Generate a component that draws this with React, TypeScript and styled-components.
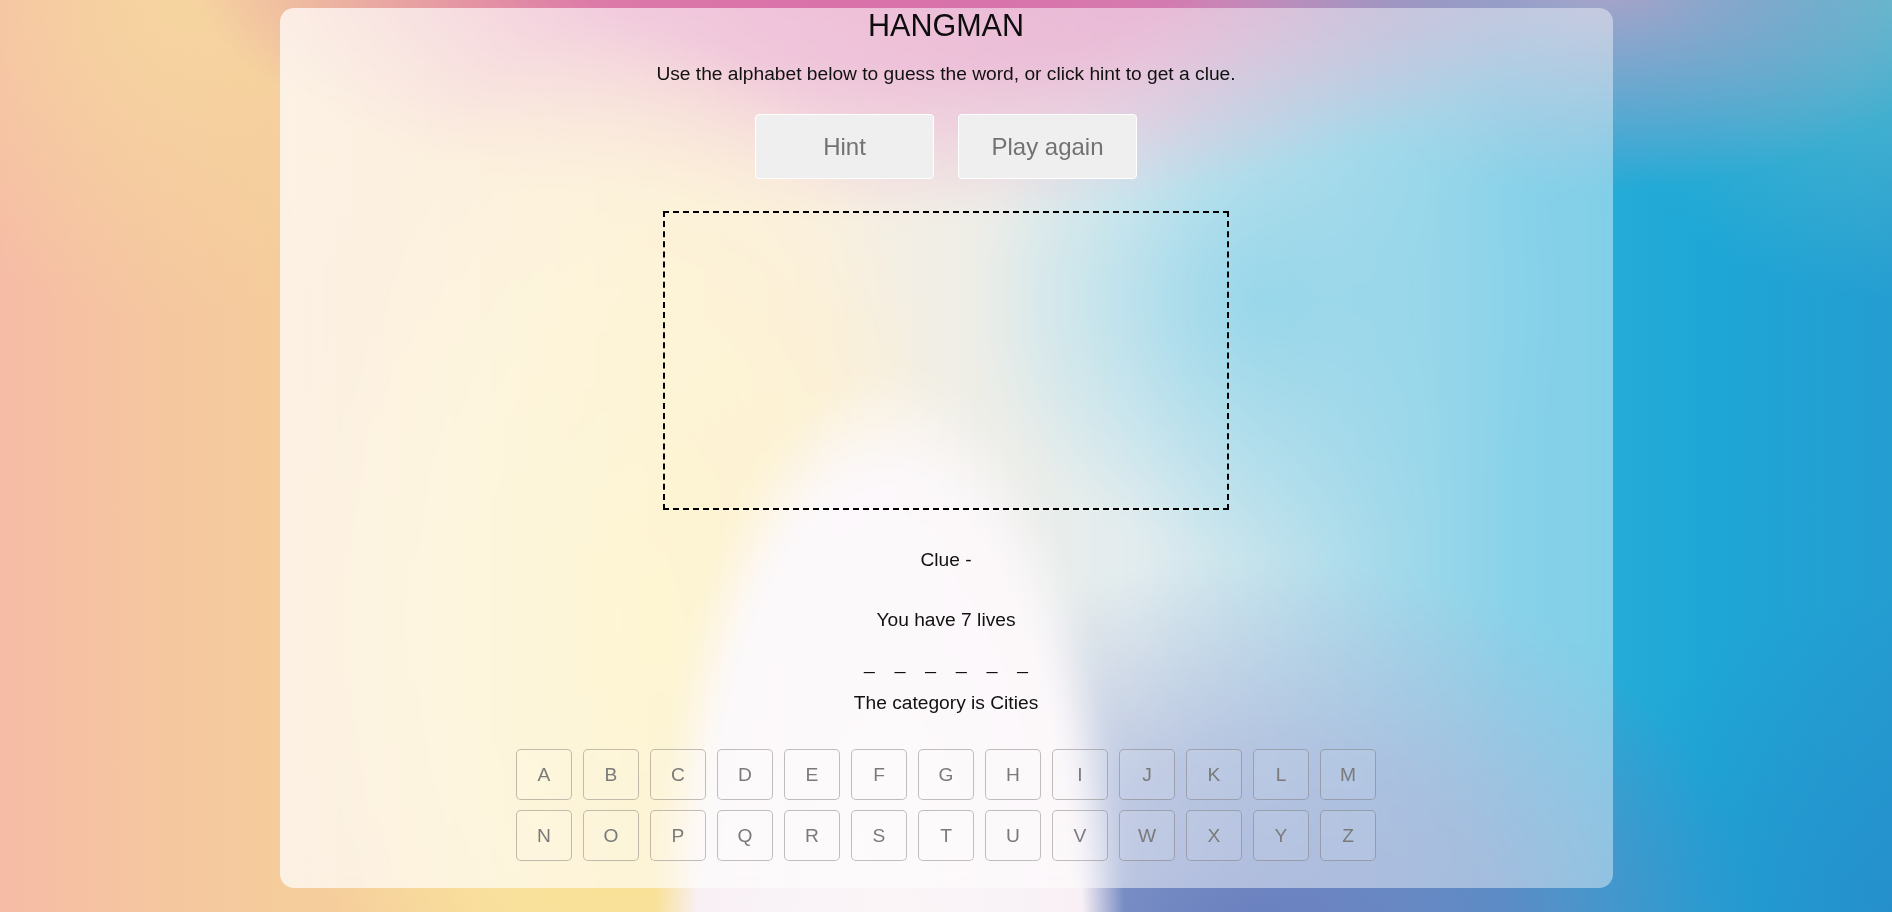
import React from "react";
import styled, { createGlobalStyle } from "styled-components";

const GlobalStyle = createGlobalStyle`
  html, body {
    margin: 0;
    padding: 0;
    height: 100%;
  }
  body {
    font-family: "Liberation Sans", Arial, Helvetica, sans-serif;
  }
  #root {
    min-height: 100%;
  }
`;

const Scene = styled.div`
  min-height: 912px;
  box-sizing: border-box;
  padding-top: 8px;
  display: flex;
  justify-content: center;
  align-items: flex-start;
  background:
    radial-gradient(ellipse 235px 580px at 890px 950px, #fbf5f8 0%, #f8f0f5 82%, rgba(248, 240, 245, 0) 100%),
    radial-gradient(ellipse 340px 600px at 630px 620px, #fbe68e 0%, #f9e09c 60%, rgba(249, 224, 156, 0) 100%),
    radial-gradient(ellipse 700px 270px at 880px -50px, #d86aa8 0%, rgba(216, 106, 168, 0.85) 45%, rgba(216, 106, 168, 0) 100%),
    radial-gradient(ellipse 380px 210px at 1600px -20px, #b0a2c8 0%, rgba(176, 162, 200, 0) 100%),
    radial-gradient(ellipse 320px 300px at 1892px 0px, rgba(92, 192, 206, 0.85) 0%, rgba(92, 192, 206, 0) 100%),
    radial-gradient(ellipse 300px 260px at 1270px 300px, #3fb4d8 0%, rgba(63, 180, 216, 0) 100%),
    radial-gradient(ellipse 500px 380px at 1260px 940px, #6a7fbf 0%, rgba(106, 127, 191, 0.75) 50%, rgba(106, 127, 191, 0) 100%),
    radial-gradient(ellipse 320px 320px at 1892px 912px, rgba(38, 132, 200, 0.55) 0%, rgba(38, 132, 200, 0) 100%),
    radial-gradient(ellipse 340px 320px at 180px 0px, rgba(246, 214, 160, 0.9) 0%, rgba(246, 214, 160, 0) 100%),
    linear-gradient(90deg, #f6bca6 0%, #f5c79f 9%, #f5cc9c 15%, #f6d09c 26%, #f3dbb8 42%, #c6dadf 60%, #5cbcda 73%, #2eb0d8 80%, #1ea7d6 90%, #249dd1 100%);
`;

const Card = styled.main`
  width: 1333px;
  box-sizing: border-box;
  padding: 0 0 27px;
  border-radius: 14px;
  background: linear-gradient(90deg, rgba(255, 255, 255, 0.72) 0%, rgba(255, 255, 255, 0.6) 30%, rgba(255, 255, 255, 0.47) 70%, rgba(255, 255, 255, 0.42) 100%);
  backdrop-filter: blur(10px);
  display: flex;
  flex-direction: column;
  align-items: center;
  color: #111;
  text-align: center;
`;

const Title = styled.h1`
  margin: 0;
  font-size: 30.5px;
  font-weight: 400;
  line-height: 35px;
  color: #0d0d0d;
`;

const Line = styled.p<{ $gap: number }>`
  margin: ${(p) => p.$gap}px 0 0;
  font-size: 19.2px;
  line-height: 22px;
`;

const ButtonRow = styled.div`
  margin-top: 29px;
  display: flex;
  gap: 24px;
`;

const ActionButton = styled.button`
  width: 179px;
  height: 65px;
  box-sizing: border-box;
  border: 1px solid #ffffff;
  border-radius: 4px;
  background: #efefef;
  color: #727272;
  font-family: inherit;
  font-size: 24px;
  cursor: pointer;
`;

const Gallows = styled.div`
  margin-top: 32px;
  width: 566px;
  height: 299px;
  box-sizing: border-box;
  border: 2px dashed #000;
`;

const Blanks = styled.ul`
  margin: 21px 0 0;
  padding: 0;
  list-style: none;
  display: flex;
  font-size: 19.2px;
  line-height: 22px;
`;

const Blank = styled.li`
  margin: 0 10px;
`;

const Keyboard = styled.div`
  margin-top: 35px;
  display: grid;
  grid-template-columns: repeat(13, 56px);
  grid-auto-rows: 51px;
  column-gap: 11px;
  row-gap: 10px;
`;

const Key = styled.button`
  box-sizing: border-box;
  border: 1px solid rgba(110, 105, 100, 0.42);
  border-radius: 5px;
  background: rgba(255, 255, 255, 0.08);
  color: #7a7a7a;
  font-family: inherit;
  font-size: 19.2px;
  padding: 0;
  cursor: pointer;
`;

const letters = "ABCDEFGHIJKLMNOPQRSTUVWXYZ".split("");
const word = ["", "", "", "", "", ""];

export default function App() {
  return (
    <>
      <GlobalStyle />
      <Scene>
        <Card>
          <Title>HANGMAN</Title>
          <Line $gap={20}>Use the alphabet below to guess the word, or click hint to get a clue.</Line>
          <ButtonRow>
            <ActionButton>Hint</ActionButton>
            <ActionButton>Play again</ActionButton>
          </ButtonRow>
          <Gallows />
          <Line $gap={39}>Clue -</Line>
          <Line $gap={38}>You have 7 lives</Line>
          <Blanks>
            {word.map((_, i) => (
              <Blank key={i}>_</Blank>
            ))}
          </Blanks>
          <Line $gap={18}>The category is Cities</Line>
          <Keyboard>
            {letters.map((l) => (
              <Key key={l}>{l}</Key>
            ))}
          </Keyboard>
        </Card>
      </Scene>
    </>
  );
}
